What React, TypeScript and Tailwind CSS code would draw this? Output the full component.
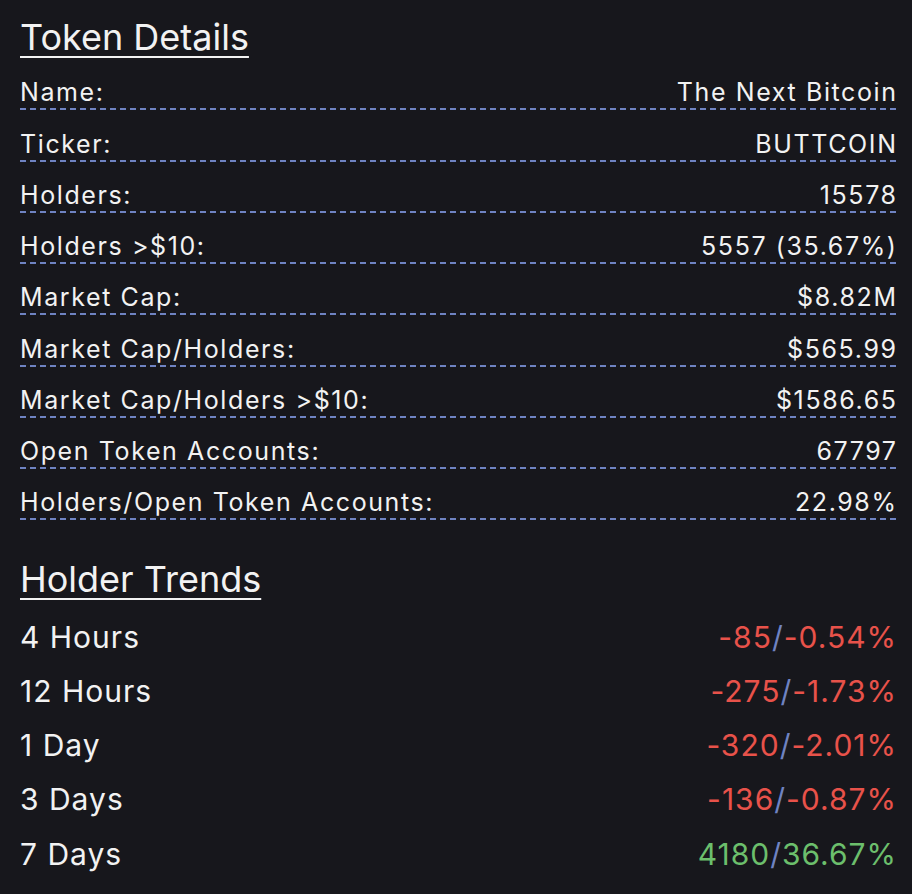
const details = [
  { label: 'Name:', value: 'The Next Bitcoin' },
  { label: 'Ticker:', value: 'BUTTCOIN' },
  { label: 'Holders:', value: '15578' },
  { label: 'Holders >$10:', value: '5557 (35.67%)' },
  { label: 'Market Cap:', value: '$8.82M' },
  { label: 'Market Cap/Holders:', value: '$565.99' },
  { label: 'Market Cap/Holders >$10:', value: '$1586.65' },
  { label: 'Open Token Accounts:', value: '67797' },
  { label: 'Holders/Open Token Accounts:', value: '22.98%' },
];

const trends = [
  { period: '4 Hours', count: '-85', pct: '-0.54%', up: false },
  { period: '12 Hours', count: '-275', pct: '-1.73%', up: false },
  { period: '1 Day', count: '-320', pct: '-2.01%', up: false },
  { period: '3 Days', count: '-136', pct: '-0.87%', up: false },
  { period: '7 Days', count: '4180', pct: '36.67%', up: true },
];

export default function App() {
  return (
    <div
      className="min-h-screen bg-[#17171c] text-[#f2f2f2] pl-5 pr-4"
      style={{ fontFamily: 'Inter, "Noto Sans", sans-serif' }}
    >
      {/* Token Details */}
      <h2 className="pt-[17px] text-4xl underline underline-offset-[6px] decoration-2">Token Details</h2>
      <div className="mt-[2px]">
        {details.map((row) => (
          <div
            key={row.label}
            className="flex justify-between pt-[17.25px] text-[25px] leading-8 tracking-[1.6px] border-b-2 border-dashed border-[#6f83c2]"
          >
            <span>{row.label}</span>
            <span className="-mr-[1.6px]">{row.value}</span>
          </div>
        ))}
      </div>

      {/* Holder Trends */}
      <h2 className="mt-[39px] text-4xl underline underline-offset-[6px] decoration-2">Holder Trends</h2>
      <div className="mt-[1px]">
        {trends.map((t) => (
          <div key={t.period} className="flex justify-between pt-[18.25px] text-3xl leading-9 tracking-[1px]">
            <span>{t.period}</span>
            <span className={`-mr-[1px] ${t.up ? 'text-[#6cbf6c]' : 'text-[#e8524a]'}`}>
              {t.count}
              <span className="text-[#6f83c2]">/</span>
              {t.pct}
            </span>
          </div>
        ))}
      </div>
    </div>
  );
}
